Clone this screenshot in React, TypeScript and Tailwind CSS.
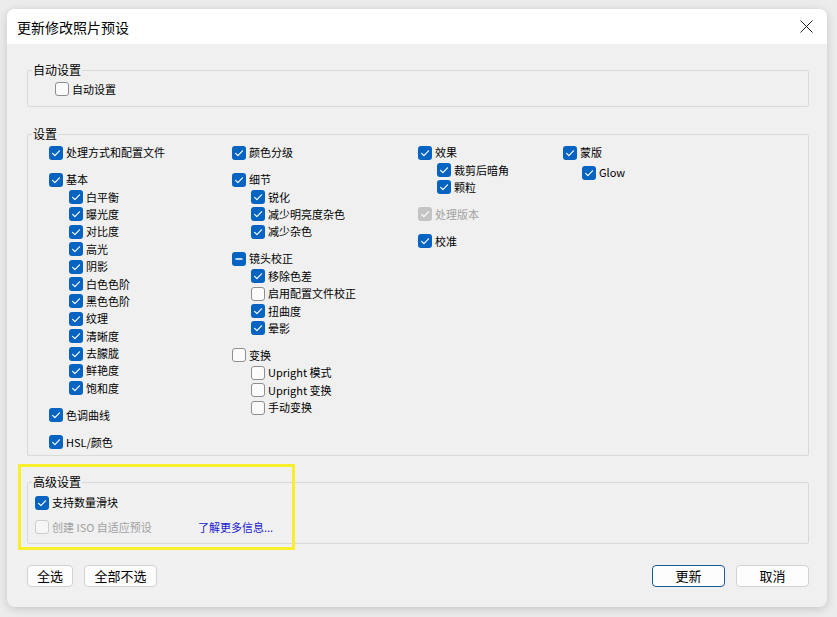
import React from 'react';

type State = 'on' | 'off' | 'mixed';

interface Item {
  label: string;
  state: State;
  sub?: boolean;
  gap?: boolean;
  disabled?: boolean;
  extra?: string;
}

const col1: Item[] = [
  { label: '处理方式和配置文件', state: 'on' },
  { label: '基本', state: 'on', gap: true },
  { label: '白平衡', state: 'on', sub: true },
  { label: '曝光度', state: 'on', sub: true },
  { label: '对比度', state: 'on', sub: true },
  { label: '高光', state: 'on', sub: true },
  { label: '阴影', state: 'on', sub: true },
  { label: '白色色阶', state: 'on', sub: true },
  { label: '黑色色阶', state: 'on', sub: true },
  { label: '纹理', state: 'on', sub: true },
  { label: '清晰度', state: 'on', sub: true },
  { label: '去朦胧', state: 'on', sub: true },
  { label: '鲜艳度', state: 'on', sub: true },
  { label: '饱和度', state: 'on', sub: true },
  { label: '色调曲线', state: 'on', gap: true },
  { label: 'HSL/颜色', state: 'on', gap: true },
];

const col2: Item[] = [
  { label: '颜色分级', state: 'on' },
  { label: '细节', state: 'on', gap: true },
  { label: '锐化', state: 'on', sub: true },
  { label: '减少明亮度杂色', state: 'on', sub: true },
  { label: '减少杂色', state: 'on', sub: true },
  { label: '镜头校正', state: 'mixed', gap: true },
  { label: '移除色差', state: 'on', sub: true },
  { label: '启用配置文件校正', state: 'off', sub: true },
  { label: '扭曲度', state: 'on', sub: true },
  { label: '晕影', state: 'on', sub: true },
  { label: '变换', state: 'off', gap: true },
  { label: 'Upright 模式', state: 'off', sub: true },
  { label: 'Upright 变换', state: 'off', sub: true },
  { label: '手动变换', state: 'off', sub: true },
];

const col3: Item[] = [
  { label: '效果', state: 'on' },
  { label: '裁剪后暗角', state: 'on', sub: true },
  { label: '颗粒', state: 'on', sub: true },
  { label: '处理版本', state: 'on', gap: true, disabled: true },
  { label: '校准', state: 'on', gap: true },
];

const col4: Item[] = [
  { label: '蒙版', state: 'on' },
  { label: 'Glow', state: 'on', sub: true, extra: 'mt-[2.6px]' },
];

function Check({ state, disabled }: { state: State; disabled?: boolean }) {
  if (state === 'off') {
    return (
      <span
        className={`w-[14px] h-[14px] shrink-0 rounded-[3px] border ${
          disabled ? 'border-[#cdcdcd] bg-[#f6f6f6]' : 'border-[#8e8e8e] bg-[#fbfbfb]'
        }`}
      />
    );
  }
  return (
    <span
      className={`w-[14px] h-[14px] shrink-0 rounded-[3px] flex items-center justify-center ${
        disabled ? 'bg-[#c4c4c4]' : 'bg-[#0563c1]'
      }`}
    >
      <svg width="14" height="14" viewBox="0 0 14 14" fill="none">
        {state === 'mixed' ? (
          <path d="M4 7h6" stroke="white" strokeWidth="1.4" strokeLinecap="round" />
        ) : (
          <path
            d="M3.6 7.3l2.3 2.3 4.6-4.8"
            stroke="white"
            strokeWidth="1.2"
            strokeLinecap="round"
            strokeLinejoin="round"
          />
        )}
      </svg>
    </span>
  );
}

function Row({ item, indent }: { item: Item; indent: string }) {
  return (
    <div
      className={`h-[17.4px] flex items-center gap-[3px] ${item.sub ? indent : ''} ${
        item.gap ? 'mt-[9.6px]' : ''
      } ${item.extra ?? ''}`}
    >
      <Check state={item.state} disabled={item.disabled} />
      <span className={`text-[11px] leading-none whitespace-nowrap ${item.disabled ? 'text-[#a2a2a2]' : 'text-black'}`}>
        {item.label}
      </span>
    </div>
  );
}

function Column({ items, width, indent }: { items: Item[]; width: string; indent: string }) {
  return (
    <div className={`flex flex-col ${width}`}>
      {items.map((it) => (
        <Row key={it.label} item={it} indent={indent} />
      ))}
    </div>
  );
}

function Group({ title, className, children }: { title: string; className?: string; children: React.ReactNode }) {
  return (
    <fieldset className={`border border-[#d9d9d9] rounded-[2px] ${className ?? ''}`}>
      <legend className="ml-[4px] px-[1px] text-[12px] leading-[16px] text-black">{title}</legend>
      {children}
    </fieldset>
  );
}

function Btn({ children, w, primary }: { children: React.ReactNode; w: string; primary?: boolean }) {
  return (
    <button
      className={`h-[22px] ${w} rounded-[4px] text-[13px] leading-none text-black flex items-center justify-center ${
        primary ? 'border border-[#1a5a9c] bg-[#fdfdfd]' : 'border border-[#d2d2d2] bg-[#fdfdfd]'
      }`}
    >
      {children}
    </button>
  );
}

export default function App() {
  return (
    <div className="w-[837px] h-[617px] bg-[#ececec] pt-[9px] pl-[7px] font-['Noto_Sans_CJK_SC','Noto_Sans',sans-serif]">
      <div className="relative w-[820px] h-[598px] rounded-[8px] bg-[#f0f0f0] shadow-[0_2px_10px_rgba(0,0,0,0.16)] flex flex-col overflow-hidden">
        <div className="h-[35px] bg-white flex items-center justify-between pl-[10px] pr-[14px]">
          <span className="text-[14px] leading-none text-black">更新修改照片预设</span>
          <svg width="13" height="13" viewBox="0 0 13 13" fill="none">
            <path d="M0.5 0.5l12 12M12.5 0.5l-12 12" stroke="#222" strokeWidth="1" />
          </svg>
        </div>

        <div className="flex flex-col pl-[20px] pr-[18px]">
          <Group title="自动设置" className="mt-[18px]">
            <div className="pt-[2px] pb-[8px] pl-[27px]">
              <div className="h-[18px] flex items-center gap-[3px]">
                <Check state="off" />
                <span className="text-[11px] leading-none">自动设置</span>
              </div>
            </div>
          </Group>

          <Group title="设置" className="mt-[19px]">
            <div className="pt-[2px] pb-[4px] pl-[21px] flex">
              <Column items={col1} width="w-[183px]" indent="ml-[20px]" />
              <Column items={col2} width="w-[186px]" indent="ml-[19px]" />
              <Column items={col3} width="w-[145px]" indent="ml-[19px]" />
              <Column items={col4} width="w-[150px]" indent="ml-[19px]" />
            </div>
          </Group>

          <Group title="高级设置" className="mt-[18px]">
            <div className="pt-[4px] pb-[7px] pl-[7px] flex flex-col gap-[7px]">
              <div className="h-[17.4px] flex items-center gap-[3px]">
                <Check state="on" />
                <span className="text-[11px] leading-none">支持数量滑块</span>
              </div>
              <div className="h-[17.4px] flex items-center">
                <div className="w-[163px] flex items-center gap-[3px]">
                  <Check state="off" disabled />
                  <span className="text-[11px] leading-none text-[#a2a2a2]">创建 ISO 自适应预设</span>
                </div>
                <span className="text-[11px] leading-none text-[#1a1ad0]">了解更多信息...</span>
              </div>
            </div>
          </Group>

          <div className="mt-[21px] flex items-center justify-between">
            <div className="flex gap-[11px]">
              <Btn w="w-[46px]">全选</Btn>
              <Btn w="w-[73px]">全部不选</Btn>
            </div>
            <div className="flex gap-[11px]">
              <Btn w="w-[73px]" primary>
                更新
              </Btn>
              <Btn w="w-[73px]">取消</Btn>
            </div>
          </div>
        </div>

        <div className="absolute left-[11px] top-[455px] w-[277px] h-[86px] border-[3px] border-[#f7ef2b] pointer-events-none" />
      </div>
    </div>
  );
}
